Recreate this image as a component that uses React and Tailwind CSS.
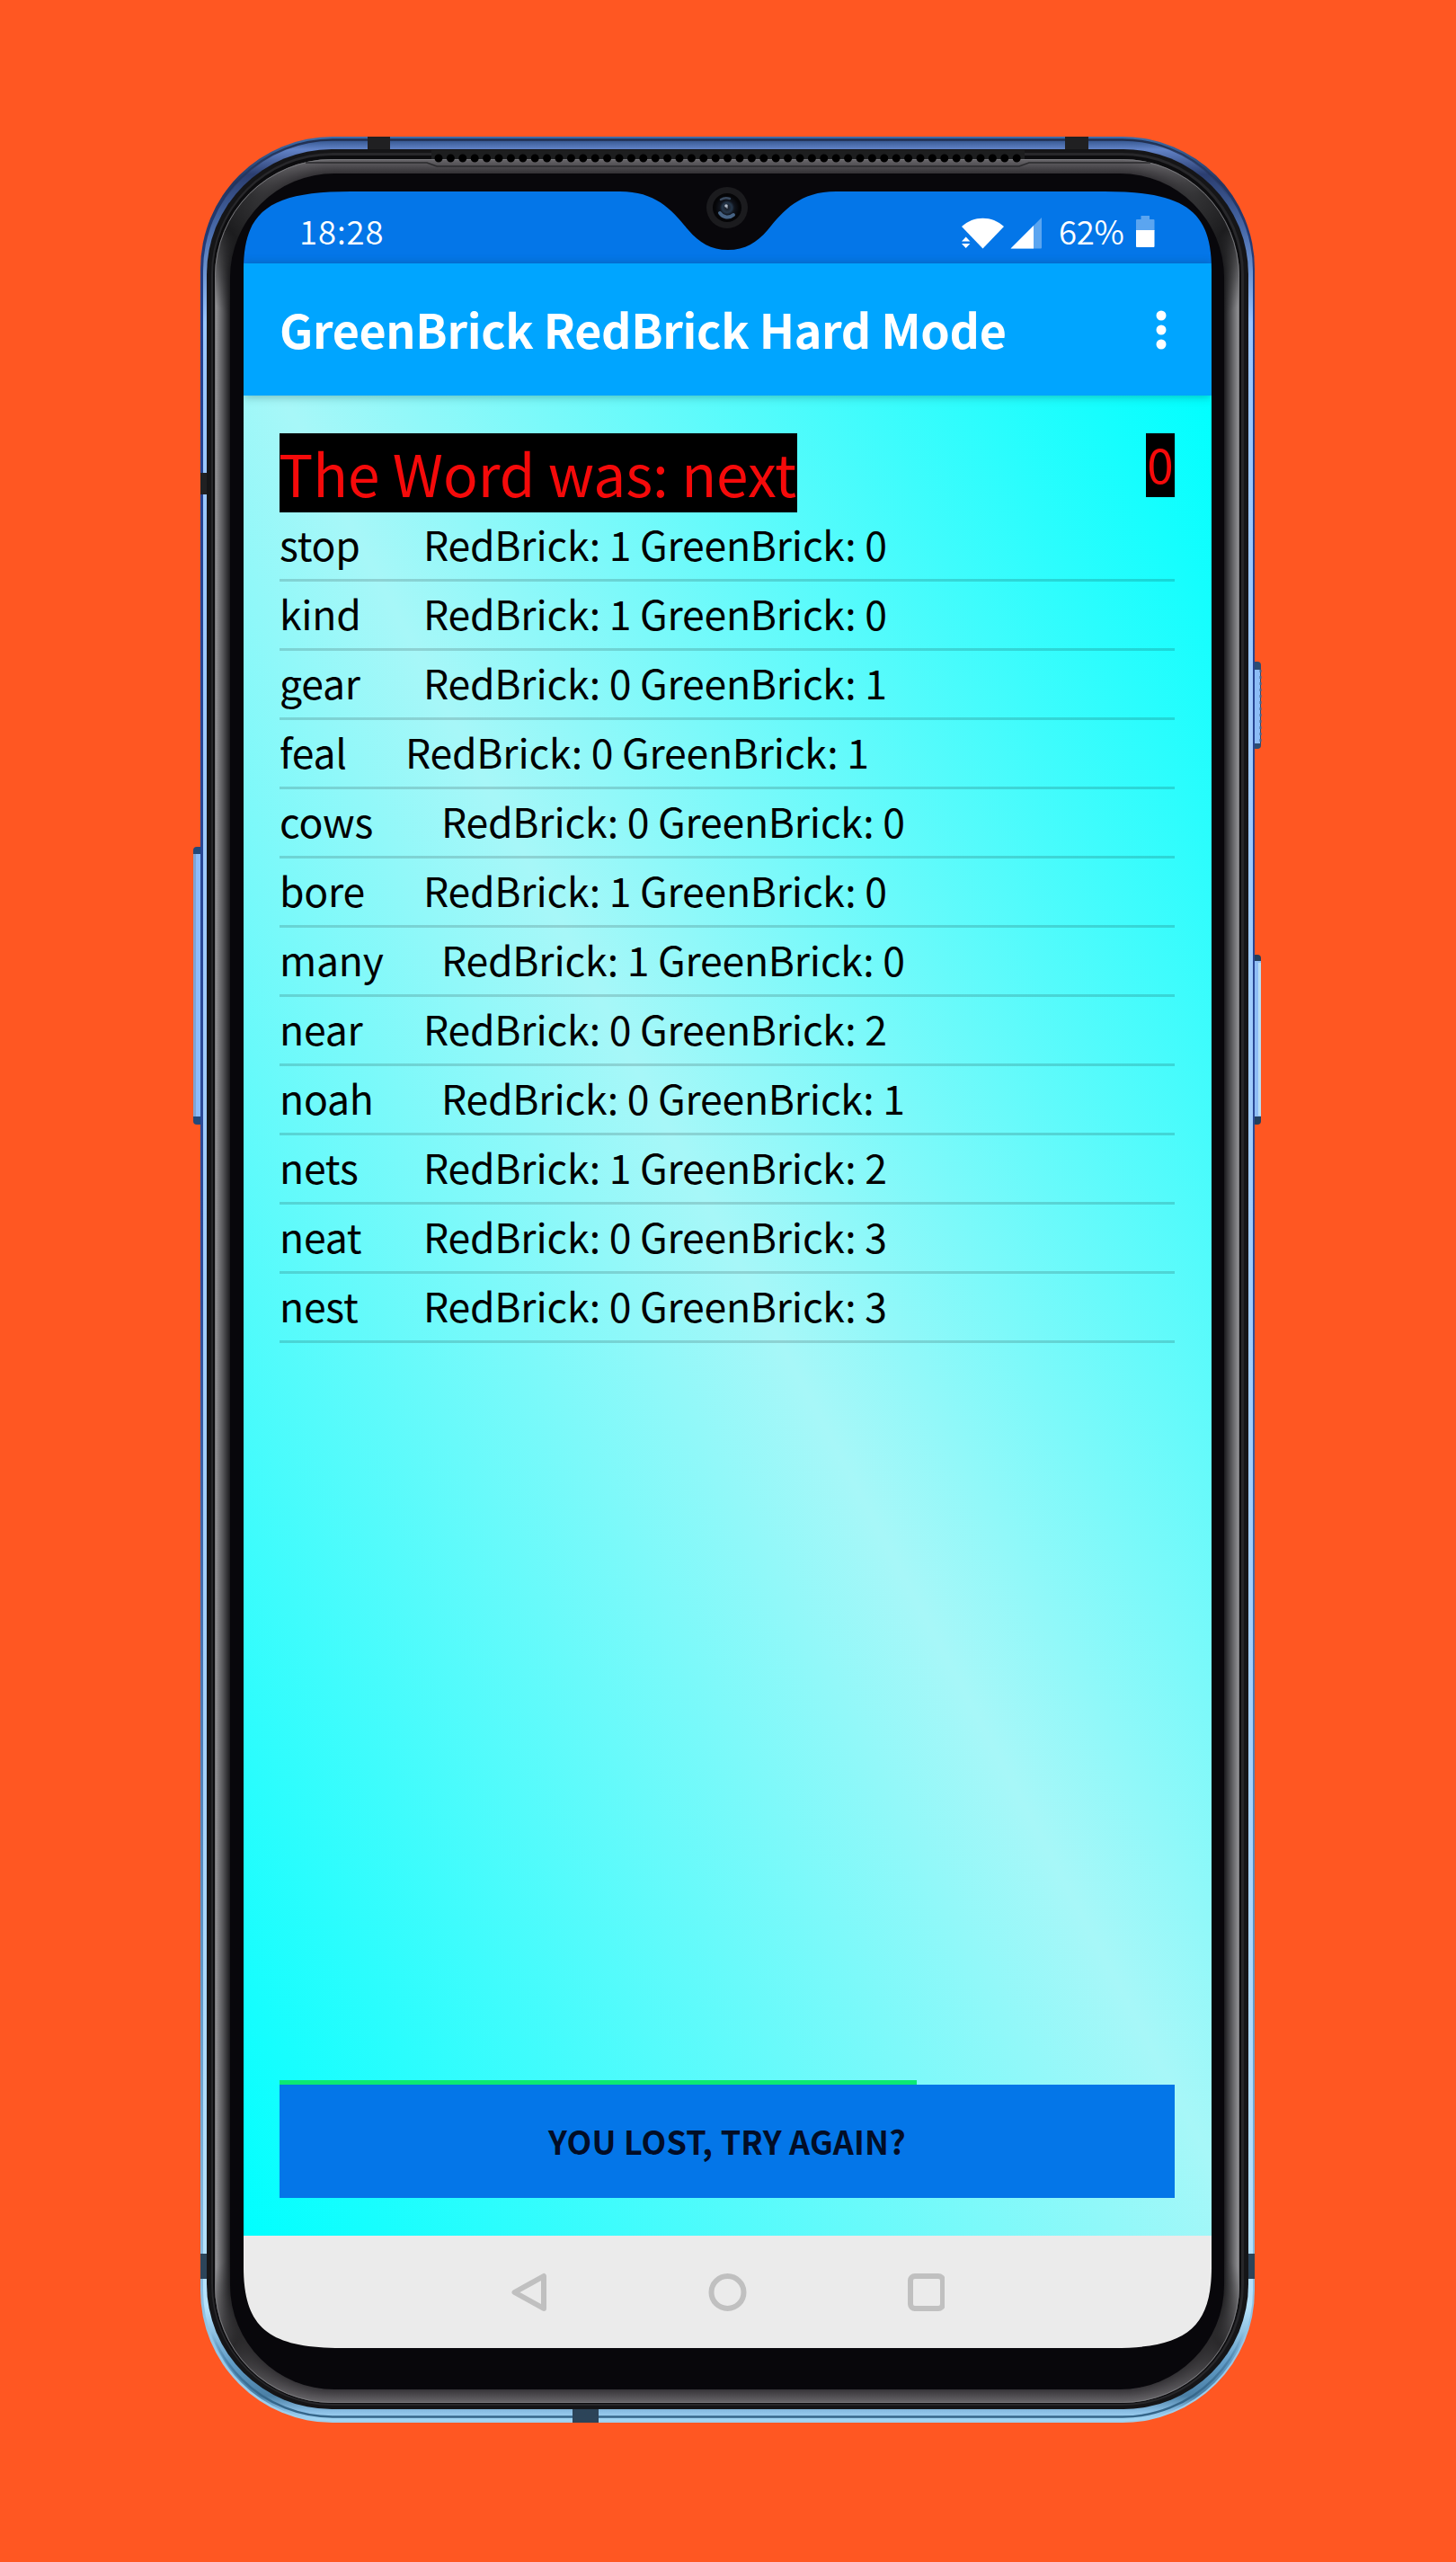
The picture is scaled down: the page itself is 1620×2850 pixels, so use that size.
const rows = [
  ["stop", 1, 0, 471],
  ["kind", 1, 0, 471],
  ["gear", 0, 1, 471],
  ["feal", 0, 1, 451],
  ["cows", 0, 0, 491],
  ["bore", 1, 0, 471],
  ["many", 1, 0, 491],
  ["near", 0, 2, 471],
  ["noah", 0, 1, 491],
  ["nets", 1, 2, 471],
  ["neat", 0, 3, 471],
  ["nest", 0, 3, 471],
];

const SCREEN =
  "path('M0 87 C0 22 29 0 119 0 L419 0 C459 0 477 21 495 43 C507 57 520 65 539 65 C558 65 571 57 583 43 C601 21 619 0 659 0 L958 0 C1048 0 1077 22 1077 87 L1077 2309 C1077 2377 1048 2399 968 2399 L109 2399 C29 2399 0 2377 0 2309 Z')";

const mix = (a, b, t) => a + (b - a) * t;

function Band() {
  const n = 16;
  return Array.from({ length: n }, (_, i) => {
    const t = i / (n - 1);
    const x = mix(239, 255, t);
    const y = mix(177, 192, t);
    const right = mix(1379, 1363, t);
    const bottom = mix(2673, 2658, t);
    return (
      <rect key={i} x={x} y={y} width={right - x} height={bottom - y} rx={mix(130, 118, t)}
        fill={`url(#band${i})`} />
    );
  });
}

function BandDefs() {
  const n = 16;
  return Array.from({ length: n }, (_, i) => {
    const t = i / (n - 1);
    const side = Math.round(mix(150, 30, t));
    const top = Math.round(mix(105, 52, t));
    const s = `rgb(${side},${side},${side + 3})`;
    const e = `rgb(${top},${top - 2},${top + 2})`;
    return (
      <linearGradient key={i} id={`band${i}`} x1="0" y1="0" x2="0" y2="1">
        <stop offset="0" stopColor={e} />
        <stop offset="0.015" stopColor="#303032" />
        <stop offset="0.03" stopColor="#1c1c1e" />
        <stop offset="0.065" stopColor={s} />
        <stop offset="0.94" stopColor={s} />
        <stop offset="0.975" stopColor="#2a292b" />
        <stop offset="1" stopColor={e} />
      </linearGradient>
    );
  });
}

function PhoneBody() {
  return (
    <svg className="absolute inset-0" width="1620" height="2850" viewBox="0 0 1620 2850">
      <defs>
        <linearGradient id="edge" x1="0" y1="0" x2="0" y2="1">
          <stop offset="0" stopColor="#3d6ca8" />
          <stop offset="0.02" stopColor="#253762" />
          <stop offset="0.08" stopColor="#22408f" />
          <stop offset="0.5" stopColor="#2c4a98" />
          <stop offset="0.8" stopColor="#5f96c6" />
          <stop offset="1" stopColor="#9fd0ee" />
        </linearGradient>
        <linearGradient id="rim" x1="0" y1="0" x2="0" y2="1">
          <stop offset="0" stopColor="#35578f" />
          <stop offset="0.004" stopColor="#6283c8" />
          <stop offset="0.015" stopColor="#2b3e70" />
          <stop offset="0.04" stopColor="#4a6cac" />
          <stop offset="0.08" stopColor="#9ac6ff" />
          <stop offset="0.7" stopColor="#a4d0fa" />
          <stop offset="0.95" stopColor="#b6e2fb" />
          <stop offset="0.975" stopColor="#5f9bc6" />
          <stop offset="0.989" stopColor="#4b80a6" />
          <stop offset="0.996" stopColor="#8cc0e6" />
          <stop offset="1" stopColor="#a5d8f5" />
        </linearGradient>
        <linearGradient id="seam" gradientUnits="userSpaceOnUse" x1="0" y1="152" x2="0" y2="2695">
          <stop offset="0" stopColor="#1f2c4c" />
          <stop offset="0.03" stopColor="#1f2c4c" stopOpacity="0" />
          <stop offset="0.96" stopColor="#35668a" stopOpacity="0" />
          <stop offset="0.99" stopColor="#35668a" />
        </linearGradient>
        <radialGradient id="lens">
          <stop offset="0" stopColor="#8896a8" />
          <stop offset="0.12" stopColor="#1c222c" />
          <stop offset="0.4" stopColor="#25374b" />
          <stop offset="0.6" stopColor="#10141c" />
          <stop offset="1" stopColor="#050507" />
        </radialGradient>
        <BandDefs />
      </defs>

      <g>
        <rect x="215" y="942" width="12" height="309" rx="4" fill="#23497a" />
        <rect x="215" y="950" width="9" height="292" fill="#8cbcfa" />
        <rect x="215" y="950" width="3" height="292" fill="#7fa3d2" />
        <rect x="1393" y="736" width="10" height="97" rx="4" fill="#2b4d74" />
        <rect x="1395" y="745" width="7" height="82" fill="#8cbcf6" />
        <path d="M1402.500 745V827" stroke="#41658c" strokeWidth="2" strokeDasharray="3 4" />
        <rect x="1393" y="1062" width="10" height="189" rx="4" fill="#23405f" />
        <rect x="1395" y="1069" width="8" height="173" fill="#8fbdf5" />
        <rect x="1400" y="1071" width="3" height="170" fill="#b7dcf2" />
      </g>

      <rect x="223" y="152" width="1173" height="2543" rx="147" fill="url(#edge)" />
      <rect x="226" y="156" width="1168" height="2537" rx="145" fill="url(#rim)" />
      <rect x="227" y="155.500" width="1165" height="2533" rx="143" fill="none" stroke="url(#seam)" strokeWidth="2.500" />

      <g fill="#202022">
        <rect x="409" y="152" width="25" height="16" />
        <rect x="1185" y="152" width="26" height="16" />
        <rect x="223" y="526" width="9" height="24" />
      </g>
      <g fill="#2c4459">
        <rect x="223" y="2507" width="9" height="28" />
        <rect x="1388" y="2507" width="8" height="28" />
        <rect x="637" y="2678" width="29" height="17" />
      </g>

      <rect x="230" y="166" width="1159" height="2514" rx="139" fill="#151517" />
      <rect x="235" y="170" width="1149" height="2506" rx="135" fill="#27272a" />
      <rect x="237" y="173" width="1144" height="2501" rx="132" fill="#0c0c0e" />
      <Band />
      <rect x="239.500" y="177.500" width="1139" height="2495" rx="130" fill="none" stroke="#77777b" strokeWidth="1" />
      <rect x="256" y="193" width="1106" height="2465" rx="116" fill="#08070b" />
      <rect x="480" y="167" width="660" height="10" fill="#1d1e1f" />
      <path d="M340 181 H475 L486 185 H1134 L1145 181 H1280" fill="none" stroke="#2a2a2c" strokeWidth="1.500" />
      <path d="M488 176H1132" stroke="#000" strokeWidth="9" strokeLinecap="round" strokeDasharray="0 13.400" />

      <circle cx="809" cy="231" r="23" fill="#1b1b1e" />
      <circle cx="809" cy="231" r="16" fill="#050507" />
      <circle cx="809" cy="231" r="13.500" fill="url(#lens)" />
      <path d="M801 237a10 10 0 0 0 15 2" fill="none" stroke="#466384" strokeWidth="4" strokeLinecap="round" />
      <path d="M802 222a11 11 0 0 1 10 -1" fill="none" stroke="#3a4a5f" strokeWidth="2.500" strokeLinecap="round" />
      <circle cx="808" cy="229" r="1.800" fill="#b3bcc9" />
    </svg>
  );
}

function StatusIcons() {
  return (
    <svg width="90" height="36" viewBox="1070 241 90 36" fill="#fff">
      <path d="M1070 252C1083 239.500 1104 239.500 1117 252L1093.500 276.500Z" />
      <path d="M1070 268.500L1074.700 263.500 1079.400 268.500ZM1070 271L1074.700 276 1079.400 271Z" />
      <path d="M1159 242V275.500Q1159 276.500 1158 276.500H1124.500Z" opacity=".35" />
      <path d="M1150 251V276.500H1124.500Z" />
    </svg>
  );
}

export default function App() {
  return (
    <div className="relative h-[2850px] w-[1620px] overflow-hidden bg-[#ff5722] pt-[213px] pl-[271px] font-['Noto_Sans_CJK_SC',sans-serif]">
      <PhoneBody />
      <div className="relative flex h-[2399px] w-[1077px] flex-col" style={{ clipPath: SCREEN }}>
        <div className="flex h-20 shrink-0 items-center bg-[#0476e8] pl-[62px] text-white">
          <span className="w-[737px] pt-[8px] text-[36.5px] font-[350] leading-[40px] tracking-[0.9px]">18:28</span>
          <span className="pt-[11px]"><StatusIcons /></span>
          <span className="ml-[18px] w-[86px] whitespace-nowrap pt-[8px] text-[36.5px] font-[350] leading-[40px] tracking-[-0.3px]">62%</span>
          <svg className="mt-[9px]" width="21" height="35" viewBox="0 0 21 35" fill="#fff">
            <path d="M1 4H5.500V0H15V4H19.500Q20.500 4 20.500 5V17H0V5Q0 4 1 4Z" opacity=".35" />
            <path d="M0 16H20.500V34Q20.500 35 19.500 35H1Q0 35 0 34Z" />
          </svg>
        </div>
        <div className="z-10 flex h-[147px] shrink-0 items-center justify-between bg-[#00a5ff] pr-[50px] pl-10 text-white shadow-[0_1px_10px_rgba(0,60,60,0.35)]">
          <h1 className="whitespace-nowrap pb-[2px] text-[52px] font-bold leading-none tracking-[-0.35px]">GreenBrick RedBrick Hard Mode</h1>
          <svg width="12" height="44" viewBox="0 0 12 44" fill="#fff" overflow="visible">
            <circle cx="6" cy="6" r="5.500" />
            <circle cx="6" cy="22" r="5.500" />
            <circle cx="6" cy="38" r="5.500" />
          </svg>
        </div>
        <main className="flex h-[2047px] shrink-0 flex-col bg-[linear-gradient(to_top_right,#00ffff,#a7f7f8_52%,#00ffff)] pt-[42px] pr-[41px] pl-10">
          <div className="flex h-[88px] items-start justify-between text-[#f50a0a]">
            <div className="flex h-[88px] w-[576px] items-center whitespace-nowrap bg-black pb-[3px] text-[64px] tracking-[-0.05px]">
              <span className="-ml-px">The Word was: next</span>
            </div>
            <div className="flex h-[71px] w-8 items-center justify-center bg-black pb-[3px] text-[53px]">0</div>
          </div>
          <ul>
            {rows.map(([word, red, green, x]) => (
              <li key={word} className="flex h-[77px] items-center whitespace-nowrap border-b-[3px] border-black/15 pb-1 text-[44.5px] tracking-[-0.22px] text-black">
                <span style={{ width: x - 311 }}>{word}</span>
                <span>RedBrick: {red} GreenBrick: {green}</span>
              </li>
            ))}
          </ul>
          <div className="mt-auto h-[5px] w-[709px] bg-[#0ce973]" />
          <button className="mb-[42px] h-[126px] shrink-0 bg-[#0476e8] pb-[3px] text-[36px] font-bold tracking-[0.2px] text-[#020d26]">YOU LOST, TRY AGAIN?</button>
        </main>
        <nav className="flex h-[125px] shrink-0 items-center bg-[#ebebeb] pl-[298px]">
          <svg width="482" height="44" viewBox="0 0 482 44" fill="none" stroke="#c0c0c0" strokeWidth="6" strokeLinejoin="round">
            <path d="M3.500 22L36 4V40Z" />
            <circle cx="240.500" cy="22" r="18" />
            <rect x="444" y="4" width="36" height="36" rx="5" />
          </svg>
        </nav>
      </div>
    </div>
  );
}
